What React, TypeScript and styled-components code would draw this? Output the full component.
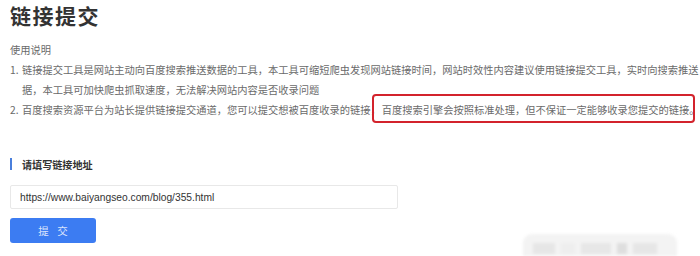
import React from 'react';
import styled, { createGlobalStyle } from 'styled-components';

const GlobalStyle = createGlobalStyle`
  html, body {
    margin: 0;
    padding: 0;
    background: #fff;
  }
  body {
    font-family: "Noto Sans CJK SC", "Noto Sans", sans-serif;
  }
`;

const Page = styled.div`
  position: relative;
  width: 700px;
  height: 256px;
  overflow: hidden;
  padding: 0 10px;
  box-sizing: border-box;
`;

const Title = styled.h1`
  margin: 0;
  font-size: 21px;
  line-height: 30px;
  font-weight: 700;
  letter-spacing: 1.5px;
  color: #333;
`;

const Notes = styled.div`
  margin-top: 10px;
  font-size: 10.25px;
  line-height: 20px;
  color: #6a6a6a;
  white-space: nowrap;
`;

const NoteItem = styled.div`
  display: flex;
`;

const Num = styled.span`
  flex: 0 0 12px;
`;

const NoteText = styled.div`
  display: flex;
  flex-direction: column;
`;

const Highlight = styled.span`
  position: relative;
  display: inline-block;
  margin-left: 1px;

  &::after {
    content: '';
    position: absolute;
    top: -6px;
    bottom: -3px;
    left: -10px;
    right: 5px;
    border: 2px solid #d3232c;
    border-radius: 4px;
  }
`;

const SectionHead = styled.div`
  margin-top: 36px;
  display: flex;
  align-items: center;
  gap: 10px;
  height: 16px;
`;

const Bar = styled.span`
  width: 2px;
  height: 12px;
  background: #4a7fdc;
`;

const Label = styled.span`
  font-size: 10.1px;
  font-weight: 700;
  color: #333;
`;

const UrlInput = styled.input`
  display: block;
  margin-top: 13px;
  width: 388px;
  height: 24px;
  box-sizing: border-box;
  border: 1px solid #e8e8e8;
  border-radius: 2px;
  padding: 0 9px;
  font-family: "Liberation Sans", Arial, sans-serif;
  font-size: 10.25px;
  color: #333;
  outline: none;
  background: #fff;
`;

const SubmitButton = styled.button`
  display: block;
  margin-top: 9px;
  width: 86px;
  height: 25px;
  border: none;
  border-radius: 3px;
  background: #3c7cf2;
  color: rgba(255, 255, 255, 0.82);
  font-family: "Noto Sans CJK SC", sans-serif;
  font-size: 10.5px;
  letter-spacing: 3px;
  text-indent: 3px;
  cursor: pointer;
`;

const Watermark = styled.div`
  position: absolute;
  right: 23px;
  bottom: 0;
  width: 154px;
  height: 22px;
  display: flex;
  align-items: flex-end;
  gap: 6px;
  padding: 0 10px 2px;
  box-sizing: border-box;
  background: #f3f3f3;
  border-radius: 9px 9px 0 0;
  filter: blur(1.5px);
`;

const Blot = styled.span<{ $w: number; $shade: string }>`
  width: ${(p) => p.$w}px;
  height: 11px;
  background: ${(p) => p.$shade};
`;

const blots = [
  { w: 22, shade: '#e6e6e6' },
  { w: 14, shade: '#eeeeee' },
  { w: 30, shade: '#e7e7e7' },
  { w: 10, shade: '#dedede' },
  { w: 24, shade: '#e6e6e6' },
];

function App() {
  return (
    <Page>
      <GlobalStyle />
      <Title>链接提交</Title>
      <Notes>
        <div>使用说明</div>
        <NoteItem>
          <Num>1.</Num>
          <NoteText>
            <span>链接提交工具是网站主动向百度搜索推送数据的工具，本工具可缩短爬虫发现网站链接时间，网站时效性内容建议使用链接提交工具，实时向搜索推送</span>
            <span>据，本工具可加快爬虫抓取速度，无法解决网站内容是否收录问题</span>
          </NoteText>
        </NoteItem>
        <NoteItem>
          <Num>2.</Num>
          <NoteText>
            <span>
              百度搜索资源平台为站长提供链接提交通道，您可以提交想被百度收录的链接，
              <Highlight>百度搜索引擎会按照标准处理，但不保证一定能够收录您提交的链接。</Highlight>
            </span>
          </NoteText>
        </NoteItem>
      </Notes>
      <SectionHead>
        <Bar />
        <Label>请填写链接地址</Label>
      </SectionHead>
      <UrlInput readOnly value="https://www.baiyangseo.com/blog/355.html" />
      <SubmitButton>提 交</SubmitButton>
      <Watermark>
        {blots.map((b, i) => (
          <Blot key={i} $w={b.w} $shade={b.shade} />
        ))}
      </Watermark>
    </Page>
  );
}

export default App;
